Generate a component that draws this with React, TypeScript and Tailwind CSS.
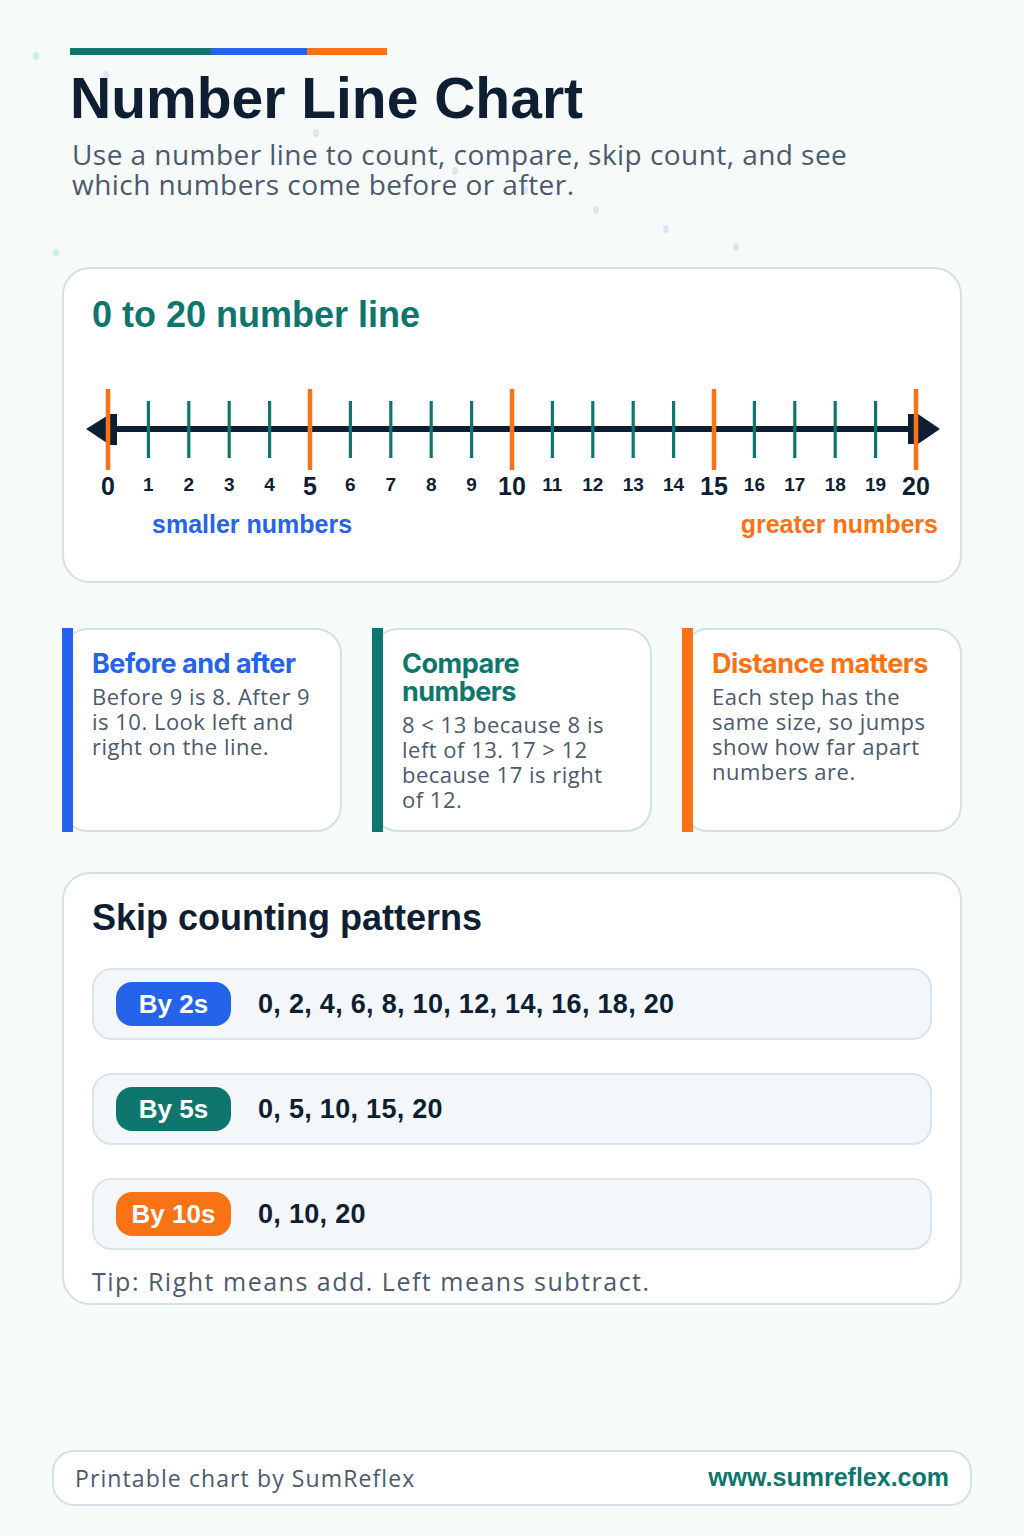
import React from "react";

const ARIAL = { fontFamily: '"Liberation Sans", Arial, sans-serif' };
const BODY = { fontFamily: '"Open Sans", sans-serif' };
const INTER = { fontFamily: 'Inter, "Liberation Sans", sans-serif' };

const NAVY = "#0f1f33";

function NumberLine() {
  const ticks = Array.from({ length: 21 }, (_, i) => i);
  const x0 = 16;
  const step = 40.4;
  return (
    <svg
      width={846}
      height={125}
      viewBox="0 0 846 125"
      className="block overflow-visible"
      style={ARIAL}
    >
      <line x1={22} y1={48} x2={820} y2={48} stroke={NAVY} strokeWidth={6} />
      <polygon points="-6,48 18,33 25,33 25,64 18,64" fill={NAVY} />
      <polygon points="816,33 826,33 848,48 826,63 816,63" fill={NAVY} />
      {ticks.map((i) => {
        const x = x0 + step * i;
        const major = i % 5 === 0;
        return major ? (
          <line key={i} x1={x} y1={8} x2={x} y2={89} stroke="#f97316" strokeWidth={4.5} />
        ) : (
          <line key={i} x1={x} y1={20} x2={x} y2={77} stroke="#0f766e" strokeWidth={3.2} />
        );
      })}
      {ticks.map((i) => {
        const x = x0 + step * i;
        const major = i % 5 === 0;
        return (
          <text
            key={"t" + i}
            x={x}
            y={major ? 114 : 110}
            textAnchor="middle"
            fontWeight={700}
            fontSize={major ? 25 : 19}
            fill={NAVY}
          >
            {i}
          </text>
        );
      })}
    </svg>
  );
}

function InfoCard({
  color,
  title,
  body,
}: {
  color: string;
  title: string;
  body: string;
}) {
  return (
    <div className="relative h-[204px] rounded-[26px] border-2 border-[#d3e0ea] bg-white pl-[28px] pr-[22px] pt-[20px]">
      <div
        className="absolute left-[-2px] top-[-2px] bottom-[-2px] w-[11px]"
        style={{ backgroundColor: color }}
      />
      <div
        className="text-[27px] font-bold leading-[28px] tracking-[-0.5px]"
        style={{ ...INTER, color }}
      >
        {title}
      </div>
      <div
        className="mt-[6px] text-[22px] leading-[25px] tracking-[0.5px] text-[#4b5a6e]"
        style={BODY}
      >
        {body}
      </div>
    </div>
  );
}

function SkipRow({ label, color, values }: { label: string; color: string; values: string }) {
  return (
    <div className="flex h-[72px] items-center rounded-[20px] border-2 border-[#d9e5ee] bg-[#f3f7fa] pl-[22px]">
      <div
        className="flex h-[44px] w-[115px] items-center justify-center rounded-[16px] text-[26px] font-bold text-white"
        style={{ ...ARIAL, backgroundColor: color }}
      >
        {label}
      </div>
      <div
        className="ml-[27px] text-[27px] font-bold tracking-[0.3px]"
        style={{ ...ARIAL, color: NAVY }}
      >
        {values}
      </div>
    </div>
  );
}

function Dots() {
  const dots: [number, number, string][] = [
    [36, 56, "#d4ece3"],
    [106, 75, "#dbe5fa"],
    [316, 133, "#d4ece3"],
    [455, 171, "#d4ece3"],
    [525, 190, "#dbe5fa"],
    [596, 210, "#d4ece3"],
    [666, 229, "#dbe5fa"],
    [736, 247, "#d4ece3"],
    [56, 253, "#d4ece3"],
  ];
  return (
    <svg
      className="pointer-events-none absolute left-0 top-0"
      width={1024}
      height={300}
      viewBox="0 0 1024 300"
    >
      {dots.map(([x, y, c], i) => (
        <ellipse key={i} cx={x} cy={y} rx={3} ry={4} fill={c} />
      ))}
    </svg>
  );
}

export default function App() {
  return (
    <div className="relative flex min-h-[1536px] w-[1024px] flex-col bg-[#f6faf9] px-[62px] pt-[48px] pb-[30px]">
      <Dots />
      <div className="relative ml-[8px]">
        <div className="flex h-[7px]">
          <div className="w-[141px] bg-[#0f766e]" />
          <div className="w-[96px] bg-[#2563eb]" />
          <div className="w-[80px] bg-[#f97316]" />
        </div>
        <h1
          className="mt-[15px] text-[57px] font-bold leading-[57px]"
          style={{ ...ARIAL, color: NAVY }}
        >
          Number Line Chart
        </h1>
        <p
          className="mt-[12px] ml-[2px] w-[820px] text-[28px] leading-[30px] tracking-[0.45px] text-[#4b5a6e]"
          style={BODY}
        >
          Use a number line to count, compare, skip count, and see which numbers come before or after.
        </p>
      </div>

      <section className="relative mt-[68px] h-[316px] rounded-[28px] border-2 border-[#d3e0ea] bg-white pl-[28px] pr-[22px] pt-[28px]">
        <h2
          className="text-[36px] font-bold leading-[36px] text-[#0f766e]"
          style={ARIAL}
        >
          0 to 20 number line
        </h2>
        <div className="mt-[48px]">
          <NumberLine />
        </div>
        <div
          className="mt-[6px] flex justify-between text-[25px] font-bold leading-[25px]"
          style={ARIAL}
        >
          <span className="ml-[60px] text-[#2563eb]">smaller numbers</span>
          <span className="text-[#f97316]">greater numbers</span>
        </div>
      </section>

      <div className="mt-[45px] grid grid-cols-3 gap-[30px]">
        <InfoCard
          color="#2563eb"
          title="Before and after"
          body="Before 9 is 8. After 9 is 10. Look left and right on the line."
        />
        <InfoCard
          color="#0f766e"
          title="Compare numbers"
          body="8 < 13 because 8 is left of 13. 17 > 12 because 17 is right of 12."
        />
        <InfoCard
          color="#f97316"
          title="Distance matters"
          body="Each step has the same size, so jumps show how far apart numbers are."
        />
      </div>

      <section className="mt-[40px] h-[433px] rounded-[28px] border-2 border-[#d3e0ea] bg-white px-[28px] pt-[26px]">
        <h2
          className="text-[36px] font-bold leading-[36px]"
          style={{ ...ARIAL, color: NAVY }}
        >
          Skip counting patterns
        </h2>
        <div className="mt-[32px] flex flex-col gap-[33px]">
          <SkipRow label="By 2s" color="#2563eb" values="0, 2, 4, 6, 8, 10, 12, 14, 16, 18, 20" />
          <SkipRow label="By 5s" color="#0f766e" values="0, 5, 10, 15, 20" />
          <SkipRow label="By 10s" color="#f97316" values="0, 10, 20" />
        </div>
        <p
          className="mt-[16px] text-[25px] leading-[30px] tracking-[1.5px] text-[#4b5a6e]"
          style={BODY}
        >
          Tip: Right means add. Left means subtract.
        </p>
      </section>

      <footer className="mx-[-10px] mt-auto flex h-[56px] items-center justify-between rounded-[22px] border-2 border-[#d3e0ea] bg-white px-[21px]">
        <span className="text-[23px] tracking-[1.1px] text-[#4b5a6e]" style={BODY}>
          Printable chart by SumReflex
        </span>
        <span className="text-[25px] font-bold text-[#0f766e]" style={ARIAL}>
          www.sumreflex.com
        </span>
      </footer>
    </div>
  );
}
